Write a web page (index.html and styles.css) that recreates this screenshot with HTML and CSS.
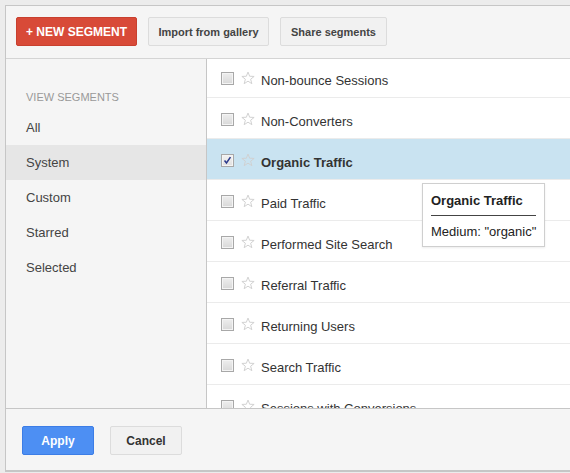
FILE: index.html
```html
<!DOCTYPE html>
<html>
<head>
<meta charset="utf-8">
<link rel="stylesheet" href="styles.css">
</head>
<body>
<div class="window">
  <div class="toolbar">
    <button class="btn btn-red">+ NEW SEGMENT</button>
    <button class="btn btn-gray btn-import">Import from gallery</button>
    <button class="btn btn-gray btn-share">Share segments</button>
  </div>
  <div class="body">
    <nav class="nav">
      <div class="nav-head">VIEW SEGMENTS</div>
      <div class="nav-item">All</div>
      <div class="nav-item active">System</div>
      <div class="nav-item">Custom</div>
      <div class="nav-item">Starred</div>
      <div class="nav-item">Selected</div>
    </nav>
    <div class="list">
      <div class="rows">
        <div class="row"><span class="cb"></span><svg class="star" viewBox="0 0 16 16"><path d="M8 1.2 L9.9 6 L15 6.2 L11 9.4 L12.4 14.5 L8 11.6 L3.6 14.5 L5 9.4 L1 6.2 L6.1 6 Z"/></svg><span class="label">Non-bounce Sessions</span></div>
        <div class="row"><span class="cb"></span><svg class="star" viewBox="0 0 16 16"><path d="M8 1.2 L9.9 6 L15 6.2 L11 9.4 L12.4 14.5 L8 11.6 L3.6 14.5 L5 9.4 L1 6.2 L6.1 6 Z"/></svg><span class="label">Non-Converters</span></div>
        <div class="row selected"><span class="cb checked"><svg viewBox="0 0 13 13"><path d="M3 6.5 L5.3 9.5 L10 2.5"/></svg></span><svg class="star" viewBox="0 0 16 16"><path d="M8 1.2 L9.9 6 L15 6.2 L11 9.4 L12.4 14.5 L8 11.6 L3.6 14.5 L5 9.4 L1 6.2 L6.1 6 Z"/></svg><span class="label">Organic Traffic</span></div>
        <div class="row"><span class="cb"></span><svg class="star" viewBox="0 0 16 16"><path d="M8 1.2 L9.9 6 L15 6.2 L11 9.4 L12.4 14.5 L8 11.6 L3.6 14.5 L5 9.4 L1 6.2 L6.1 6 Z"/></svg><span class="label">Paid Traffic</span></div>
        <div class="row"><span class="cb"></span><svg class="star" viewBox="0 0 16 16"><path d="M8 1.2 L9.9 6 L15 6.2 L11 9.4 L12.4 14.5 L8 11.6 L3.6 14.5 L5 9.4 L1 6.2 L6.1 6 Z"/></svg><span class="label">Performed Site Search</span></div>
        <div class="row"><span class="cb"></span><svg class="star" viewBox="0 0 16 16"><path d="M8 1.2 L9.9 6 L15 6.2 L11 9.4 L12.4 14.5 L8 11.6 L3.6 14.5 L5 9.4 L1 6.2 L6.1 6 Z"/></svg><span class="label">Referral Traffic</span></div>
        <div class="row"><span class="cb"></span><svg class="star" viewBox="0 0 16 16"><path d="M8 1.2 L9.9 6 L15 6.2 L11 9.4 L12.4 14.5 L8 11.6 L3.6 14.5 L5 9.4 L1 6.2 L6.1 6 Z"/></svg><span class="label">Returning Users</span></div>
        <div class="row"><span class="cb"></span><svg class="star" viewBox="0 0 16 16"><path d="M8 1.2 L9.9 6 L15 6.2 L11 9.4 L12.4 14.5 L8 11.6 L3.6 14.5 L5 9.4 L1 6.2 L6.1 6 Z"/></svg><span class="label">Search Traffic</span></div>
        <div class="row"><span class="cb"></span><svg class="star" viewBox="0 0 16 16"><path d="M8 1.2 L9.9 6 L15 6.2 L11 9.4 L12.4 14.5 L8 11.6 L3.6 14.5 L5 9.4 L1 6.2 L6.1 6 Z"/></svg><span class="label">Sessions with Conversions</span></div>
      </div>
      <div class="tooltip">
        <div class="tip-title">Organic Traffic</div>
        <div class="tip-body">Medium: "organic"</div>
      </div>
    </div>
  </div>
  <div class="footer">
    <button class="btn btn-blue">Apply</button>
    <button class="btn btn-gray btn-cancel">Cancel</button>
  </div>
</div>
</body>
</html>
```

FILE: styles.css
```css
html, body {
  margin: 0;
  padding: 0;
}
body {
  background: #ececec;
  font-family: "Liberation Sans", Arial, sans-serif;
  color: #333;
  width: 570px;
  height: 473px;
  overflow: hidden;
}
.window {
  margin: 5px 0 0 5px;
  width: 565px;
  border: 1px solid #c6c6c6;
  border-right: none;
  background: #f5f5f5;
}
.toolbar {
  display: flex;
  gap: 11px;
  padding: 11px 0 0 10px;
  height: 41px;
  border-bottom: 1px solid #d4d4d4;
}
.btn {
  font-family: "Liberation Sans", Arial, sans-serif;
  height: 29px;
  border-radius: 2px;
  font-weight: bold;
  padding: 0;
  cursor: default;
}
.btn-red {
  width: 121px;
  background: #d84a38;
  border: 1px solid #c8402f;
  color: #fff;
  font-size: 12px;
}
.btn-gray {
  background: #f1f1f1;
  border: 1px solid #dcdcdc;
  color: #444;
  font-size: 11px;
}
.btn-import { width: 121px; }
.btn-share { width: 107px; }
.body {
  display: flex;
  height: 349px;
}
.nav {
  width: 200px;
  border-right: 1px solid #c6c6c6;
  background: #f5f5f5;
  padding-top: 25px;
}
.nav-head {
  height: 26px;
  padding-left: 20px;
  font-size: 11px;
  color: #999;
  line-height: 26px;
}
.nav-item {
  height: 35px;
  line-height: 35px;
  padding-left: 20px;
  font-size: 13px;
  color: #444;
}
.nav-item.active {
  background: #e6e6e6;
}
.list {
  flex: 1;
  position: relative;
  background: #fff;
  overflow: hidden;
}
.rows {
  margin-top: -2px;
}
.row {
  border-bottom: 1px solid #ebebeb;
  display: flex;
  align-items: center;
  padding-left: 14px;
  padding-top: 6px;
  box-sizing: border-box;
  height: 41px;
  font-size: 13px;
  color: #333;
  white-space: nowrap;
}
.row.selected {
  background: #c9e3f1;
}
.row.selected .label {
  font-weight: bold;
}
.cb {
  width: 11px;
  height: 11px;
  border: 1px solid #a8a8a8;
  background: linear-gradient(#eee, #d8d8d8);
  box-shadow: inset 0 0 0 1px #f4f4f4;
  display: inline-flex;
  margin-top: -3px;
  flex: none;
}
.cb.checked {
  background: linear-gradient(#f2f2f2, #e0e0e0);
}
.cb svg {
  width: 11px;
  height: 11px;
  fill: none;
  stroke: #2b3a8c;
  stroke-width: 1.8;
}
.star {
  width: 14px;
  height: 14px;
  margin-left: 7px;
  margin-top: -5px;
  fill: none;
  stroke: #d0d0d0;
  stroke-width: 1.1;
  stroke-linejoin: round;
  flex: none;
}
.label {
  margin-left: 6px;
}
.tooltip {
  position: absolute;
  left: 215px;
  top: 124px;
  padding: 0 8px;
  background: #fff;
  border: 1px solid #cfcfcf;
  box-shadow: 0 1px 2px rgba(0,0,0,0.08);
  font-size: 13px;
  color: #222;
  white-space: nowrap;
}
.tip-title {
  font-weight: bold;
  height: 31px;
  line-height: 33px;
  border-bottom: 1px solid #444;
}
.tip-body {
  height: 30px;
  line-height: 32px;
}
.footer {
  border-top: 1px solid #c6c6c6;
  height: 63px;
  box-sizing: border-box;
  padding: 17px 0 0 16px;
  display: flex;
  gap: 16px;
  align-items: flex-start;
  border-bottom: 1px solid #c6c6c6;
}
.btn-blue {
  width: 72px;
  height: 29px;
  background: #4d8ff3;
  border: 1px solid #3c7de6;
  color: #fff;
  font-size: 12px;
}
.btn-cancel {
  width: 72px;
  height: 29px;
  font-size: 12px;
  color: #333;
}
```
